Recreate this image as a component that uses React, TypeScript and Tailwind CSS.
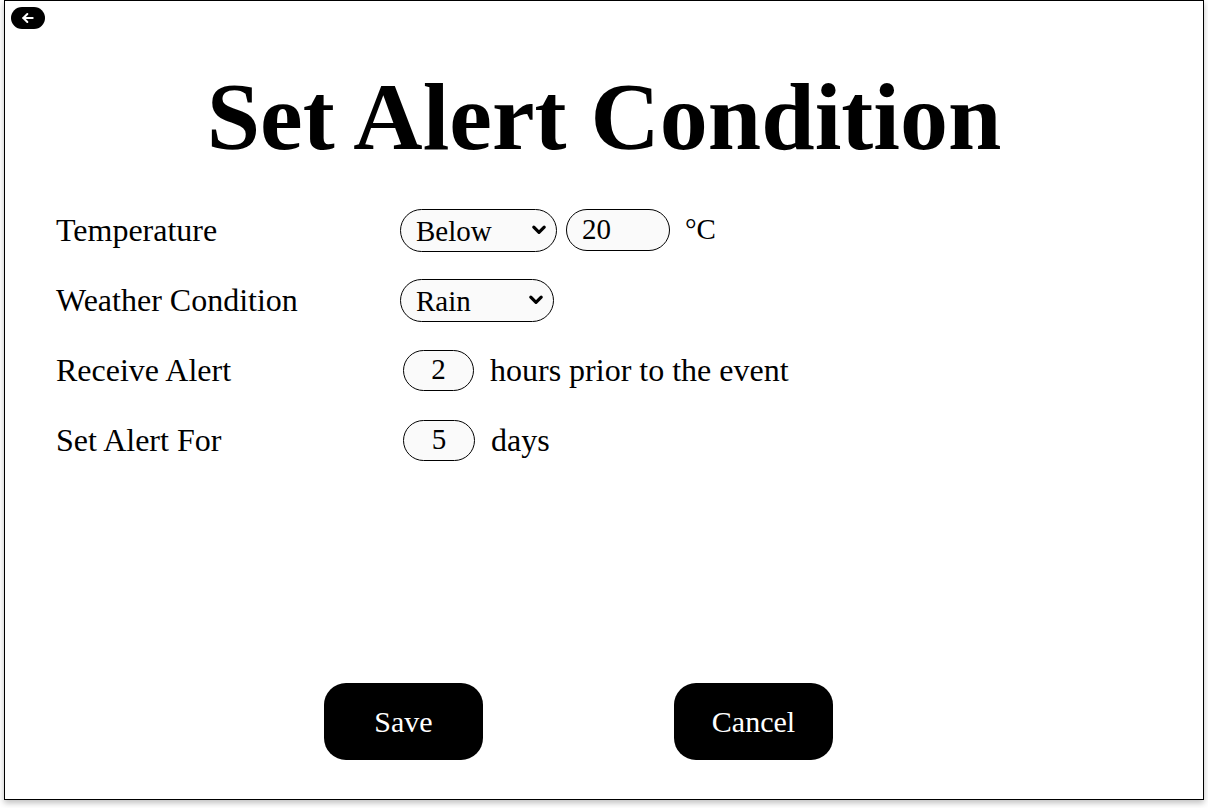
import * as React from 'react';

const serif = { fontFamily: '"Liberation Serif", "Times New Roman", serif' };

const Chevron: React.FC = () => (
  <svg
    className="pointer-events-none absolute right-[10px] top-1/2 h-[16px] w-[16px] -translate-y-1/2"
    viewBox="0 0 16 16"
    fill="none"
    stroke="black"
    strokeWidth={3.2}
    strokeLinecap="round"
    strokeLinejoin="round"
  >
    <path d="M2.8 5.2 L8 10.4 L13.2 5.2" />
  </svg>
);

interface ISelectProps {
  value: string;
  options: string[];
  width: string;
}

const PillSelect: React.FC<ISelectProps> = ({ value, options, width }) => {
  const [current, setCurrent] = React.useState(value);
  return (
    <div className={`relative ${width}`}>
      <select
        value={current}
        onChange={(e) => setCurrent(e.target.value)}
        className="h-[43px] w-full appearance-none rounded-full border border-black bg-[#fafafa] pl-[15px] pr-[30px] text-[29px] text-black outline-none"
        style={serif}
      >
        {options.map((o) => (
          <option key={o}>{o}</option>
        ))}
      </select>
      <Chevron />
    </div>
  );
};

const App: React.FC = () => {
  const [temp, setTemp] = React.useState('20');
  const [hours, setHours] = React.useState('2');
  const [days, setDays] = React.useState('5');

  return (
    <div className="min-h-screen bg-white" style={serif}>
      <div className="ml-[4px] flex h-[800px] w-[1200px] flex-col border border-black bg-white shadow-[0_3px_6px_rgba(0,0,0,0.25)]">
        <div className="pl-[6px] pt-[6px]">
          <button className="flex h-[22px] w-[34px] items-center justify-center rounded-full bg-black">
            <svg
              viewBox="0 0 24 24"
              className="h-[16px] w-[16px]"
              fill="none"
              stroke="white"
              strokeWidth={3}
              strokeLinecap="round"
              strokeLinejoin="round"
            >
              <path d="M19 12H5" />
              <path d="M11 6l-6 6 6 6" />
            </svg>
          </button>
        </div>

        <h1 className="mt-[40px] text-center text-[96px] font-bold leading-none text-black">
          Set Alert Condition
        </h1>

        <div className="mt-[30px] grid grid-cols-[344px_1fr] pl-[51px] text-[32px] text-black">
          <div className="flex h-[70px] items-center">Temperature</div>
          <div className="flex h-[70px] items-center gap-[9px]">
            <PillSelect value="Below" options={['Below', 'Above']} width="w-[157px]" />
            <input
              value={temp}
              onChange={(e) => setTemp(e.target.value)}
              className="h-[42px] w-[104px] rounded-full border border-black bg-[#fafafa] px-[15px] text-[29px] outline-none"
              style={serif}
            />
            <span className="ml-[6px] text-[29px]">°C</span>
          </div>

          <div className="flex h-[70px] items-center">Weather Condition</div>
          <div className="flex h-[70px] items-center">
            <PillSelect value="Rain" options={['Rain', 'Snow', 'Sunny', 'Cloudy']} width="w-[154px]" />
          </div>

          <div className="flex h-[70px] items-center">Receive Alert</div>
          <div className="flex h-[70px] items-center gap-[16px] pl-[3px]">
            <input
              value={hours}
              onChange={(e) => setHours(e.target.value)}
              className="h-[41px] w-[71px] rounded-full border border-black bg-[#fafafa] text-center text-[29px] outline-none"
              style={serif}
            />
            <span>hours prior to the event</span>
          </div>

          <div className="flex h-[70px] items-center">Set Alert For</div>
          <div className="flex h-[70px] items-center gap-[16px] pl-[3px]">
            <input
              value={days}
              onChange={(e) => setDays(e.target.value)}
              className="h-[41px] w-[72px] rounded-full border border-black bg-[#fafafa] text-center text-[29px] outline-none"
              style={serif}
            />
            <span>days</span>
          </div>
        </div>

        <div className="mt-auto mb-[39px] flex gap-[191px] pl-[319px]">
          <button
            className="h-[77px] w-[159px] rounded-[22px] bg-black text-[30px] text-white"
            style={serif}
          >
            Save
          </button>
          <button
            className="h-[77px] w-[159px] rounded-[22px] bg-black text-[30px] text-white"
            style={serif}
          >
            Cancel
          </button>
        </div>
      </div>
    </div>
  );
};

export default App;
